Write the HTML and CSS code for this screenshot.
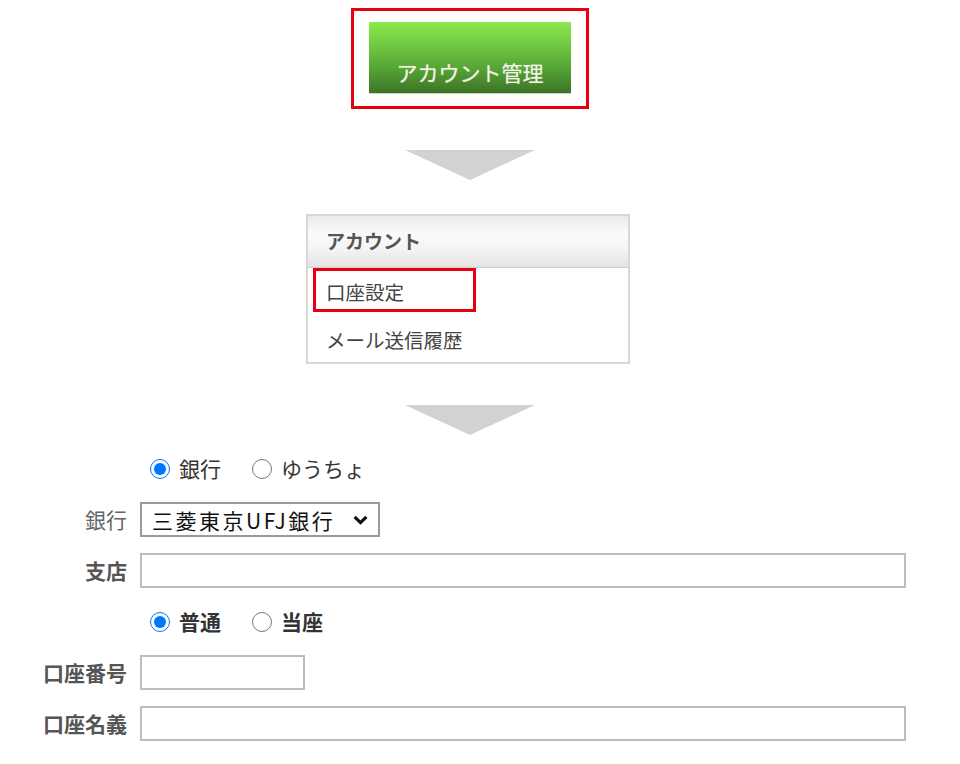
FILE: index.html
```html
<!DOCTYPE html>
<html lang="ja">
<head>
<meta charset="utf-8">
<title>口座設定</title>
<link rel="stylesheet" href="styles.css">
</head>
<body>
<div class="page">
  <div class="step-top">
    <div class="hl-box">
      <div class="btn">アカウント管理</div>
    </div>
  </div>

  <div class="arrow"></div>

  <div class="menu">
    <div class="menu-head">アカウント</div>
    <div class="menu-item first"><span class="hl-item">口座設定</span></div>
    <div class="menu-item">メール送信履歴</div>
  </div>

  <div class="arrow"></div>

  <form class="form">
    <div class="label"></div>
    <div class="radios">
      <input type="radio" name="kind" id="k1" checked><label for="k1" class="rtext">銀行</label>
      <input type="radio" name="kind" id="k2" class="r2"><label for="k2" class="rtext">ゆうちょ</label>
    </div>

    <div class="label light">銀行</div>
    <div class="select-wrap">
      <select class="select"><option>三菱東京UFJ銀行</option></select>
      <svg class="chev" width="15" height="10" viewBox="0 0 15 10"><path d="M1.6 1.8 L7.5 7.6 L13.4 1.8" fill="none" stroke="#111" stroke-width="3.2"/></svg>
    </div>

    <div class="label">支店</div>
    <div><input class="input wide" type="text"></div>

    <div class="label"></div>
    <div class="radios">
      <input type="radio" name="type" id="t1" checked><label for="t1" class="rtext bold">普通</label>
      <input type="radio" name="type" id="t2" class="r2"><label for="t2" class="rtext bold">当座</label>
    </div>

    <div class="label">口座番号</div>
    <div><input class="input short" type="text"></div>

    <div class="label">口座名義</div>
    <div><input class="input wide" type="text"></div>
  </form>
</div>
</body>
</html>
```

FILE: styles.css
```css
html, body {
  margin: 0;
  padding: 0;
  background: #ffffff;
}
body {
  font-family: "Noto Sans CJK JP", "Noto Sans", sans-serif;
  color: #333;
}
.page {
  width: 940px;
}
.step-top {
  display: flex;
  justify-content: center;
  padding-top: 8px;
}
.hl-box {
  width: 238px;
  height: 101px;
  box-sizing: border-box;
  border: 3px solid #e60012;
  padding: 11px 0 0 15px;
}
.btn {
  width: 202px;
  height: 72px;
  box-sizing: border-box;
  padding-top: 35px;
  line-height: 30px;
  font-size: 21px;
  text-align: center;
  color: #f3f3ea;
  text-shadow: 0 0 1px rgba(255,255,240,0.5);
  background: linear-gradient(#8ce84e 0%, #72cc43 30%, #56a535 65%, #3c7326 100%);
  border-bottom: 1px solid #c8d6bd;
}
.arrow {
  width: 0;
  height: 0;
  margin: 41px auto 0;
  border-left: 65px solid transparent;
  border-right: 65px solid transparent;
  border-top: 30px solid #d2d2d2;
}
.menu {
  width: 324px;
  box-sizing: border-box;
  margin: 34px 0 0 306px;
  border: 2px solid #d8d8d8;
  background: #fff;
}
.menu-head {
  height: 51px;
  line-height: 50px;
  padding-left: 18px;
  font-size: 19px;
  font-weight: bold;
  color: #555;
  border-bottom: 1px solid #cfcfcf;
  background: linear-gradient(#ebebeb 0%, #fafafa 35%, #f4f4f4 65%, #e3e3e3 100%);
}
.menu-item {
  height: 47px;
  box-sizing: border-box;
  padding: 3px 0 0 18px;
  line-height: 44px;
  font-size: 19.5px;
  color: #444;
}
.menu-item.first {
  padding: 0 0 0 5px;
}
.hl-item {
  display: inline-block;
  width: 163px;
  height: 44px;
  box-sizing: border-box;
  border: 3px solid #e60012;
  padding: 4px 0 0 10px;
  line-height: 34px;
}
.form {
  margin: 16px 0 0;
  display: grid;
  grid-template-columns: 127px 1fr;
  grid-auto-rows: 35px;
  column-gap: 13px;
  row-gap: 16px;
}
.label {
  text-align: right;
  font-size: 21px;
  line-height: 35px;
  font-weight: bold;
  color: #555;
}
.label.light {
  font-weight: normal;
  color: #666;
}
.radios {
  display: flex;
  align-items: center;
  padding-left: 10px;
}
.radios input {
  width: 20px;
  height: 20px;
  margin: 0;
}
.radios input.r2 {
  margin-left: 31px;
}
.rtext {
  margin-left: 9px;
  font-size: 21px;
  line-height: 35px;
  color: #333;
}
.rtext.bold {
  font-weight: bold;
}
.select-wrap {
  position: relative;
  width: 240px;
  height: 35px;
}
.select {
  -webkit-appearance: none;
  appearance: none;
  width: 240px;
  height: 35px;
  box-sizing: border-box;
  border: 2px solid #9a9a9a;
  border-radius: 0;
  background: #fff;
  padding: 0 0 0 10px;
  font-family: "Noto Sans CJK JP", "Noto Sans", sans-serif;
  font-size: 21px;
  letter-spacing: 2.5px;
  color: #111;
}
.chev {
  position: absolute;
  right: 12px;
  top: 13px;
  pointer-events: none;
}
.input {
  height: 35px;
  box-sizing: border-box;
  border: 2px solid #bdbdbd;
  border-radius: 0;
  background: #fff;
  margin: 0;
  padding: 0 6px;
}
.input.wide {
  width: 766px;
}
.input.short {
  width: 165px;
}
```
